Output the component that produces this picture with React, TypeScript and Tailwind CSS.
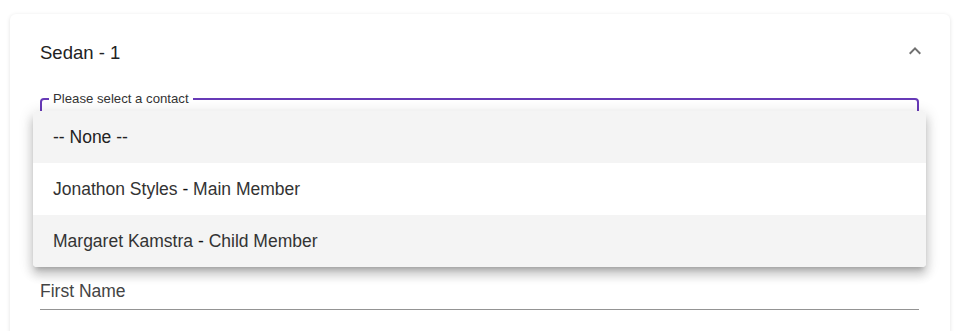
import React from 'react';

const contacts = [
  { id: 'none', label: '-- None --', highlighted: true },
  { id: 'jonathon', name: 'Jonathon Styles', role: 'Main Member', highlighted: false },
  { id: 'margaret', name: 'Margaret Kamstra', role: 'Child Member', highlighted: true },
];

function ChevronUp() {
  return (
    <svg viewBox="0 0 24 24" className="w-6 h-6 fill-[#707070]">
      <path d="M12 8l-6 6 1.41 1.41L12 10.83l4.59 4.58L18 14z" />
    </svg>
  );
}

export default function App() {
  return (
    <div className="h-[331px] bg-white pt-[14px] px-[10px] overflow-hidden font-['Liberation_Sans',Arial,sans-serif]">
      <div className="w-[940px] h-[340px] bg-white rounded-md shadow-[0_1px_4px_rgba(0,0,0,0.12)] pt-[27px] pl-[30px] pr-[31px]">
        {/* Header */}
        <div className="flex items-center justify-between h-6">
          <span className="text-[18.5px] text-[#222]">Sedan - 1</span>
          <span className="-mr-2 -mt-1">
            <ChevronUp />
          </span>
        </div>

        {/* Contact select */}
        <div className="relative mt-[26px]">
          <fieldset className="h-[62px] border-2 border-[#673ab7] rounded-[4px]">
            <legend className="ml-[7px] px-1 text-[13.2px] leading-4 text-[#333]">
              Please select a contact
            </legend>
          </fieldset>

          {/* Open menu */}
          <div className="absolute left-[-7px] top-[20px] w-[893px] bg-white rounded-[4px] overflow-hidden shadow-[0_5px_5px_-3px_rgba(0,0,0,0.2),0_8px_10px_1px_rgba(0,0,0,0.14),0_3px_14px_2px_rgba(0,0,0,0.12)] z-10">
            {contacts.map((c) => (
              <div
                key={c.id}
                className={`h-[52px] flex items-center pl-5 text-[17.5px] text-[#333] ${c.highlighted ? 'bg-[#f4f4f4]' : 'bg-white'}`}
              >
                {c.label ? (
                  <span className="text-[#222]">{c.label}</span>
                ) : (
                  <span>
                    {c.name} <span className="text-[#111]">-</span> {c.role}
                  </span>
                )}
              </div>
            ))}
          </div>
        </div>

        {/* First name */}
        <div className="mt-[126px] border-b border-[#949494] pb-[6px]">
          <div className="text-[17.5px] leading-6 text-[#444]">First Name</div>
        </div>
      </div>
    </div>
  );
}
